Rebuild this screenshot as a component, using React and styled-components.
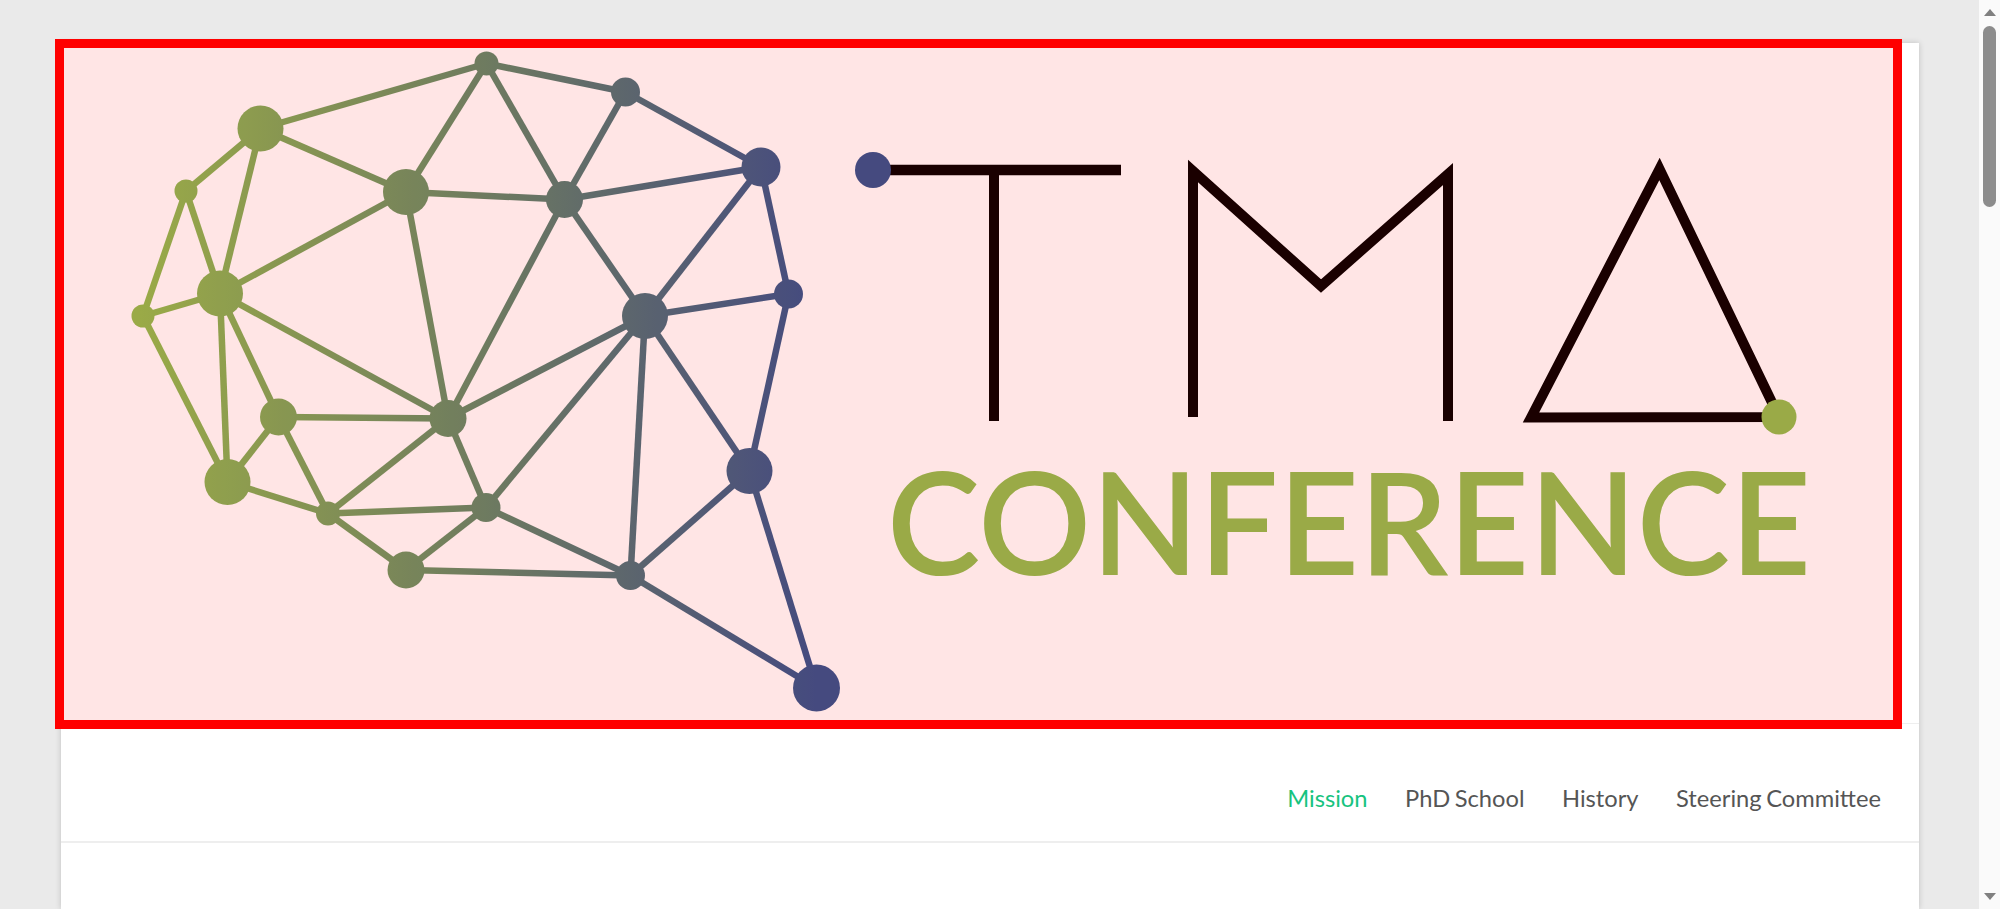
import React from 'react'
import styled, { createGlobalStyle } from 'styled-components'

const GlobalStyle = createGlobalStyle`
  html, body {
    height: 100%;
    margin: 0;
    overflow: hidden;
    background: #eaeaea;
    font-family: Lato, "Open Sans", sans-serif;
  }
`

const Page = styled.div`
  box-sizing: border-box;
  height: 100vh;
  padding: 43px 81px 0 61px;
`

const Card = styled.div`
  display: flex;
  flex-direction: column;
  height: 100%;
  background: #fff;
  box-shadow: 0 0 6px rgba(0, 0, 0, 0.18);
`

const Banner = styled.a`
  position: relative;
  display: block;
  height: 680px;
  border-bottom: 1px solid #eee;
`

const Logo = styled.svg`
  display: block;
  width: 1858px;
  height: 680px;
`

// red inspector box sitting on top of the logo
const Highlight = styled.div`
  position: absolute;
  left: -6px;
  top: -4px;
  box-sizing: border-box;
  width: 1847px;
  height: 690px;
  border: 9px solid #f00;
  background: rgba(255, 0, 0, 0.1);
`

const Nav = styled.nav`
  display: flex;
  justify-content: flex-end;
  gap: 37.5px;
  height: 119px;
  box-sizing: border-box;
  padding: 59px 38px 0 0;
  border-bottom: 2px solid #eee;
`

const NavLink = styled.a`
  font-size: 23.7px;
  line-height: 30px;
  word-spacing: -1.5px;
  color: ${(p) => (p.$active ? '#17c37f' : '#555')};
`

const Scrollbar = styled.div`
  position: fixed;
  top: 0;
  right: 0;
  bottom: 0;
  width: 21px;
  background: #fafafa;
`

const Thumb = styled.div`
  position: absolute;
  top: 26px;
  left: 4px;
  width: 13px;
  height: 181px;
  border-radius: 7px;
  background: #8c8c8c;
`

const Arrow = styled.div`
  position: absolute;
  left: 5px;
  ${(p) => (p.$down ? 'bottom: 9px;' : 'top: 9px;')}
  width: 0;
  height: 0;
  border-left: 6px solid transparent;
  border-right: 6px solid transparent;
  ${(p) => (p.$down ? 'border-top: 7px solid #808080;' : 'border-bottom: 7px solid #808080;')}
`

const nodes = {
  top: [486.5, 63.5, 12],
  crown: [625.5, 92, 14.5],
  rightUp: [761, 167, 19.5],
  temple: [788.5, 294, 14.5],
  hub: [645, 316, 23],
  midTop: [564.5, 199.5, 18.5],
  lobe: [260.5, 128.5, 23],
  lobeIn: [406, 192, 23],
  small: [186, 191, 11.5],
  left: [220, 293.5, 23],
  edge: [143, 316, 11.5],
  inner: [278.5, 417, 18.5],
  core: [448, 418.5, 18.5],
  low: [227.5, 482, 23],
  tiny: [328, 513.5, 12],
  coreLow: [486, 507.5, 14.5],
  stemL: [406, 570, 18.5],
  stemR: [630.5, 575.5, 14.5],
  jaw: [749.5, 471, 23],
  tip: [816.5, 688, 23.5],
}

const edges = [
  ['top', 'lobe'], ['top', 'crown'], ['top', 'lobeIn'], ['top', 'midTop'],
  ['crown', 'rightUp'], ['crown', 'midTop'],
  ['rightUp', 'midTop'], ['rightUp', 'hub'], ['rightUp', 'temple'],
  ['temple', 'hub'], ['temple', 'jaw'],
  ['midTop', 'lobeIn'], ['midTop', 'hub'], ['midTop', 'core'],
  ['lobeIn', 'lobe'], ['lobeIn', 'left'], ['lobeIn', 'core'],
  ['lobe', 'small'], ['lobe', 'left'],
  ['small', 'left'], ['small', 'edge'],
  ['edge', 'left'], ['edge', 'low'],
  ['left', 'low'], ['left', 'inner'], ['left', 'core'],
  ['inner', 'core'], ['inner', 'low'], ['inner', 'tiny'],
  ['low', 'tiny'],
  ['core', 'hub'], ['core', 'tiny'], ['core', 'coreLow'],
  ['hub', 'coreLow'], ['hub', 'stemR'], ['hub', 'jaw'],
  ['tiny', 'coreLow'], ['tiny', 'stemL'],
  ['coreLow', 'stemL'], ['coreLow', 'stemR'],
  ['stemL', 'stemR'],
  ['stemR', 'jaw'], ['stemR', 'tip'],
  ['jaw', 'tip'],
]

const BrainLogo = () => (
  <Logo viewBox="61 43 1858 680">
    <defs>
      <linearGradient id="brain" gradientUnits="userSpaceOnUse" x1="140" y1="0" x2="816" y2="0">
        <stop offset="0" stopColor="#8fbe50" />
        <stop offset="0.5" stopColor="#5f8a6a" />
        <stop offset="1" stopColor="#30538e" />
      </linearGradient>
    </defs>

    <g stroke="url(#brain)" strokeWidth="6.5">
      {edges.map(([a, b]) => (
        <line key={a + b} x1={nodes[a][0]} y1={nodes[a][1]} x2={nodes[b][0]} y2={nodes[b][1]} />
      ))}
    </g>
    <g fill="url(#brain)">
      {Object.entries(nodes).map(([name, [x, y, r]]) => (
        <circle key={name} cx={x} cy={y} r={r} />
      ))}
    </g>

    <g fill="none" stroke="#000" strokeWidth="10">
      <line x1="880" y1="170" x2="1121" y2="170" strokeWidth="10.5" />
      <line x1="994" y1="170" x2="994" y2="421" />
      <polyline points="1193,417 1193,171 1321,286 1448,174 1448,421" />
      <polygon points="1659.5,169 1531,417.5 1779,417" />
    </g>
    <circle cx="873" cy="170" r="18" fill="#30538e" />
    <circle cx="1779" cy="417" r="17.5" fill="#8fbe50" />

    <text
      x="887"
      y="575"
      fontFamily="Lato, sans-serif"
      fontWeight="600"
      fontSize="142"
      fill="#8fbe50"
      textLength="924"
      lengthAdjust="spacingAndGlyphs"
    >
      CONFERENCE
    </text>
  </Logo>
)

export default function App() {
  return (
    <>
      <GlobalStyle />
      <Page>
        <Card>
          <Banner>
            <BrainLogo />
            <Highlight />
          </Banner>
          <Nav>
            <NavLink $active>Mission</NavLink>
            <NavLink>PhD School</NavLink>
            <NavLink>History</NavLink>
            <NavLink>Steering Committee</NavLink>
          </Nav>
        </Card>
      </Page>
      <Scrollbar>
        <Arrow />
        <Thumb />
        <Arrow $down />
      </Scrollbar>
    </>
  )
}
